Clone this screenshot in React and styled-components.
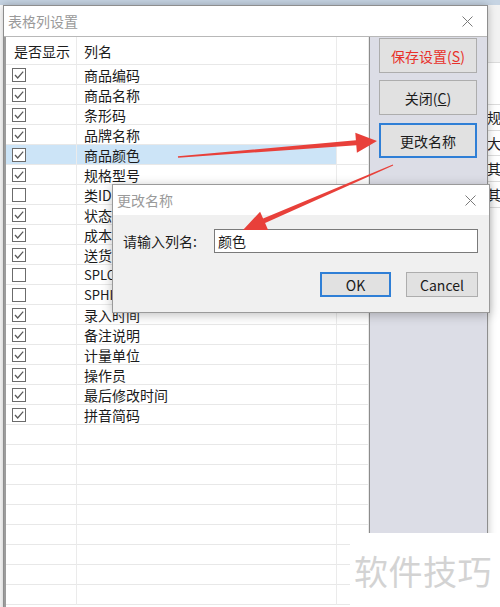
import React from 'react';
import styled, { createGlobalStyle } from 'styled-components';

const GlobalStyle = createGlobalStyle`
  html, body {
    margin: 0;
    padding: 0;
  }
  body {
    width: 500px;
    height: 607px;
    overflow: hidden;
    background: #fff;
    font-family: "Noto Sans CJK SC", "Noto Sans", sans-serif;
  }
`;

const Desktop = styled.div`
  position: relative;
  width: 500px;
  height: 607px;
  overflow: hidden;
  background: #fff;
`;

/* background application behind the dialogs */
const BackApp = styled.div`
  display: flex;
  flex-direction: column;
  height: 100%;
`;

const TopStrip = styled.div`
  height: 5px;
  background: #c6d4e3;
`;

const BackBody = styled.div`
  flex: 1;
  display: flex;
  justify-content: flex-end;
`;

const BackColumn = styled.div`
  width: 14px;
  display: flex;
  flex-direction: column;
  border-left: 1px solid #d8d8d8;
`;

const BackCell = styled.div`
  height: ${p => p.h}px;
  border-bottom: 1px solid #dcdcdc;
  background: ${p => p.shade ? '#f2f2f2' : '#fff'};
  font-size: 14px;
  line-height: ${p => p.h}px;
  color: #222;
  padding-left: 1px;
  white-space: nowrap;
  overflow: hidden;
`;

/* main window */
const Window = styled.div`
  position: absolute;
  left: 3px;
  top: 5px;
  width: 483px;
  height: 640px;
  background: #fff;
  border: 1px solid #8e8e8e;
  box-shadow: 0 0 8px rgba(0, 0, 0, 0.25);
  display: flex;
  flex-direction: column;
`;

const TitleBar = styled.div`
  height: 30px;
  flex: none;
  display: flex;
  align-items: center;
  justify-content: space-between;
  padding: 0 ${p => p.right}px 0 4px;
  background: #fff;
  color: #9a9a9a;
  font-size: 14px;
`;

const CloseIcon = () => (
  <svg width="11" height="11" viewBox="0 0 11 11">
    <path d="M0.5 0.5 L10.5 10.5 M10.5 0.5 L0.5 10.5" stroke="#7a7a7a" strokeWidth="1" />
  </svg>
);

const Body = styled.div`
  flex: 1;
  display: flex;
  border-top: 1px solid #b8b8b8;
`;

const Grid = styled.div`
  width: 363px;
  flex: none;
  border-left: 2px solid #9c9c9c;
  display: flex;
  flex-direction: column;
`;

const Row = styled.div`
  display: grid;
  grid-template-columns: 71px 260px 32px;
  height: ${p => p.header ? 28 : 20}px;
  flex: none;
`;

const Cell = styled.div`
  border-right: 1px solid #ebebeb;
  border-bottom: 1px solid #e8e8e8;
  background: ${p => p.selected ? '#cce4f7' : '#fff'};
  display: flex;
  align-items: center;
  padding-left: ${p => p.pad || 0}px;
  font-size: ${p => p.latin ? 13 : 14}px;
  color: #1b1b1b;
  white-space: nowrap;
  overflow: hidden;
`;

const Box = styled.div`
  width: 14px;
  height: 14px;
  box-sizing: border-box;
  border: 1px solid #6b6b6b;
  background: #fff;
  display: flex;
  align-items: center;
  justify-content: center;
`;

const Check = ({ on }) => (
  <Box>
    {on && (
      <svg width="12" height="12" viewBox="0 0 12 12">
        <polyline points="2,6 4.7,9 10.2,2.6" fill="none" stroke="#5a5a5a" strokeWidth="1.3" />
      </svg>
    )}
  </Box>
);

const SidePanel = styled.div`
  flex: 1;
  background: #dcdde6;
  border-left: 1px solid #8c8c8c;
  display: flex;
  flex-direction: column;
  gap: 7px;
  padding: 1px 0 0 9px;
`;

const Button = styled.button`
  width: ${p => p.w || 98}px;
  height: ${p => p.h || 35}px;
  box-sizing: border-box;
  background: #e1e1e1;
  border: ${p => p.focused ? '2px solid #2f7fd6' : '1px solid #adadad'};
  color: ${p => p.danger ? '#e8302a' : '#1b1b1b'};
  font-family: "Noto Sans CJK SC", "Noto Sans", sans-serif;
  font-size: 14px;
  padding: 0;
  display: flex;
  align-items: center;
  justify-content: center;
  margin-top: ${p => p.mt || 0}px;
`;

/* rename dialog */
const Dialog = styled.div`
  position: absolute;
  left: 112px;
  top: 184px;
  width: 376px;
  height: 127px;
  border: 1px solid #9a9a9a;
  background: #f0f0f0;
  box-shadow: 0 2px 10px rgba(0, 0, 0, 0.25);
  display: flex;
  flex-direction: column;
`;

const DialogBody = styled.div`
  flex: 1;
  display: flex;
  flex-direction: column;
  padding: 14px 11px 0 10px;
`;

const FieldRow = styled.div`
  display: flex;
  align-items: center;
  gap: 17px;
  font-size: 14px;
  color: #1b1b1b;
`;

const Input = styled.div`
  width: 264px;
  height: 24px;
  box-sizing: border-box;
  border: 1px solid #7a7a7a;
  background: #fff;
  display: flex;
  align-items: center;
  padding-left: 3px;
  font-size: 14px;
`;

const ButtonRow = styled.div`
  display: flex;
  justify-content: flex-end;
  gap: 15px;
  margin-top: 19px;
`;

const Overlay = styled.svg`
  position: absolute;
  left: 0;
  top: 0;
  pointer-events: none;
`;

const Watermark = styled.div`
  position: absolute;
  left: 350px;
  top: 533px;
  width: 150px;
  height: 74px;
  background: #fff;
  display: flex;
  align-items: center;
  padding-left: 4px;
  box-sizing: border-box;
  font-size: 34px;
  letter-spacing: 0.5px;
  color: #d3d3d3;
`;

const fields = [
  ['商品编码', true],
  ['商品名称', true],
  ['条形码', true],
  ['品牌名称', true],
  ['商品颜色', true, true],
  ['规格型号', true],
  ['类ID', false],
  ['状态', true],
  ['成本价', true],
  ['送货价', true],
  ['SPLOW', false, false, true],
  ['SPHIGH', false, false, true],
  ['录入时间', true],
  ['备注说明', true],
  ['计量单位', true],
  ['操作员', true],
  ['最后修改时间', true],
  ['拼音简码', true],
];

const arrowPoints = (tx, ty, px, py, w0, w1, headLen, headHalf) => {
  const dx = px - tx;
  const dy = py - ty;
  const len = Math.hypot(dx, dy);
  const ux = dx / len;
  const uy = dy / len;
  const nx = -uy;
  const ny = ux;
  const bx = px - ux * headLen;
  const by = py - uy * headLen;
  return [
    [tx + nx * w0 / 2, ty + ny * w0 / 2],
    [bx + nx * w1 / 2, by + ny * w1 / 2],
    [bx + nx * headHalf, by + ny * headHalf],
    [px, py],
    [bx - nx * headHalf, by - ny * headHalf],
    [bx - nx * w1 / 2, by - ny * w1 / 2],
    [tx - nx * w0 / 2, ty - ny * w0 / 2],
  ].map(p => p.map(v => v.toFixed(1)).join(',')).join(' ');
};

const App = () => {
  const rows = [...fields];
  while (rows.length < 27) rows.push(null);

  return (
    <Desktop>
      <GlobalStyle />
      <BackApp>
        <TopStrip />
        <BackBody>
          <BackColumn>
            <BackCell h={57} shade />
            <BackCell h={41} />
            <BackCell h={25}>规</BackCell>
            <BackCell h={24}>大</BackCell>
            <BackCell h={25}>其</BackCell>
            <BackCell h={25}>其</BackCell>
          </BackColumn>
        </BackBody>
      </BackApp>

      <Window>
        <TitleBar right={14}>
          <span>表格列设置</span>
          <CloseIcon />
        </TitleBar>
        <Body>
          <Grid>
            <Row header>
              <Cell pad={8}>是否显示</Cell>
              <Cell pad={7}>列名</Cell>
              <Cell />
            </Row>
            {rows.map((r, i) => (
              <Row key={i}>
                <Cell pad={6} selected={r && r[2]}>{r && <Check on={r[1]} />}</Cell>
                <Cell pad={7} selected={r && r[2]} latin={r && r[3]}>{r && r[0]}</Cell>
                <Cell />
              </Row>
            ))}
          </Grid>
          <SidePanel>
            <Button danger>保存设置(<u>S</u>)</Button>
            <Button>关闭(<u>C</u>)</Button>
            <Button focused mt={1}>更改名称</Button>
          </SidePanel>
        </Body>
      </Window>

      <Dialog>
        <TitleBar right={13}>
          <span>更改名称</span>
          <CloseIcon />
        </TitleBar>
        <DialogBody>
          <FieldRow>
            <span>请输入列名:</span>
            <Input>颜色</Input>
          </FieldRow>
          <ButtonRow>
            <Button focused w={71} h={25}>OK</Button>
            <Button w={72} h={25}>Cancel</Button>
          </ButtonRow>
        </DialogBody>
      </Dialog>

      <Overlay width="500" height="607" viewBox="0 0 500 607">
        <polygon points={arrowPoints(178, 157, 377, 141, 1.5, 5, 21, 10)} fill="#e8403a" />
        <polygon points={arrowPoints(393, 165, 243, 230, 1.2, 5, 23, 10)} fill="#e8403a" />
      </Overlay>

      <Watermark>软件技巧</Watermark>
    </Desktop>
  );
};

export default App;
